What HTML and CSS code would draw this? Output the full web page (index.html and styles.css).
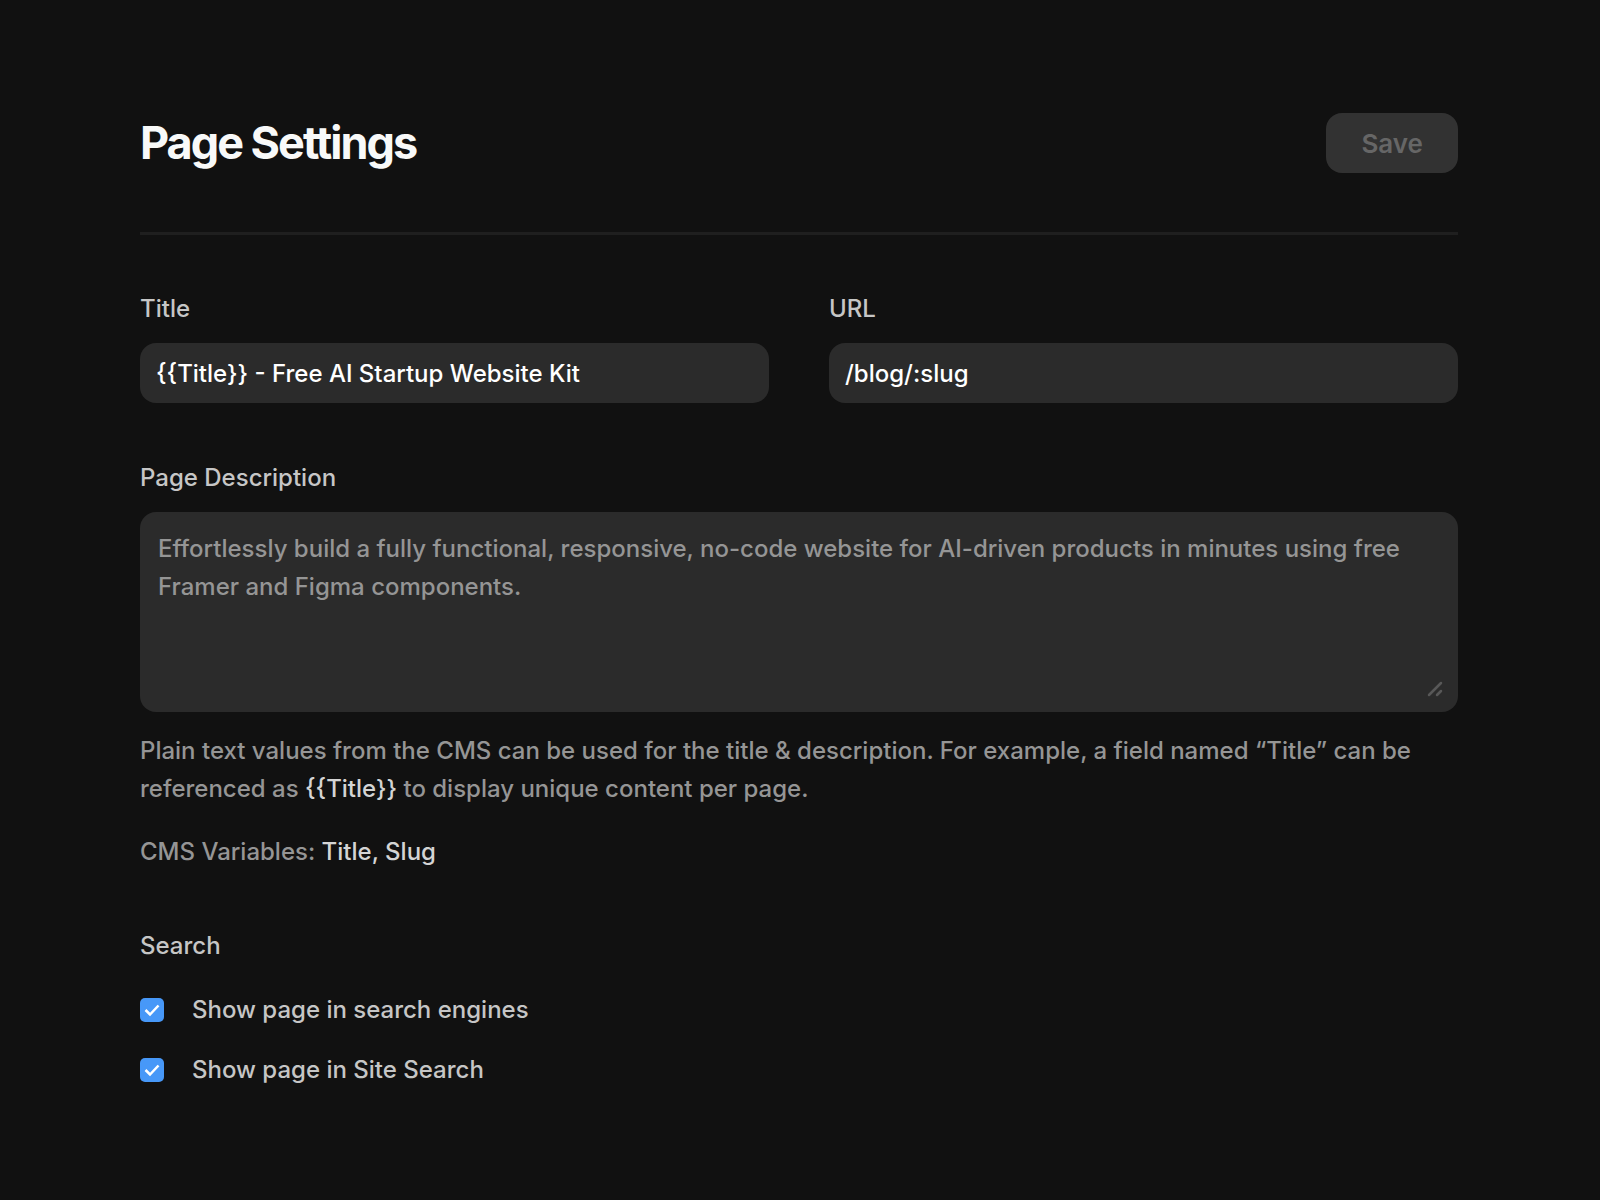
FILE: index.html
```html
<!DOCTYPE html>
<html lang="en">
<head>
    <meta charset="UTF-8">
    <meta name="viewport" content="width=device-width, initial-scale=1.0">
    <title>Page Settings</title>
    <link rel="stylesheet" href="styles.css">
</head>
<body>
    <form class="settings">
        <header class="header">
            <h1>Page Settings</h1>
            <button type="submit" class="save" disabled>Save</button>
        </header>

        <div class="row">
            <div class="field">
                <label for="title">Title</label>
                <input type="text" id="title" name="title" value="{{Title}} - Free AI Startup Website Kit">
            </div>
            <div class="field">
                <label for="url">URL</label>
                <input type="text" id="url" name="url" value="/blog/:slug">
            </div>
        </div>

        <div class="field description">
            <label for="description">Page Description</label>
            <div class="textarea-wrap">
                <textarea id="description" name="description" placeholder="Effortlessly build a fully functional, responsive, no-code website for AI-driven products in minutes using free Framer and Figma components."></textarea>
                <svg class="grip" viewBox="0 0 18 18" aria-hidden="true">
                    <path d="M3 15L15 3M11 15L15 11"/>
                </svg>
            </div>
        </div>

        <p class="hint">Plain text values from the CMS can be used for the title &amp; description. For example, a field named “Title” can be referenced as <span>{{Title}}</span> to display unique content per page.</p>
        <p class="hint">CMS Variables: <span>Title, Slug</span></p>

        <fieldset class="search">
            <legend>Search</legend>
            <label class="check">
                <input type="checkbox" name="search_engines" checked>
                Show page in search engines
            </label>
            <label class="check">
                <input type="checkbox" name="site_search" checked>
                Show page in Site Search
            </label>
        </fieldset>
    </form>
</body>
</html>
```

FILE: styles.css
```css
* {
    box-sizing: border-box;
}
body {
    margin: 0;
    padding: 113px 142px 80px 140px;
    background-color: #111;
    color: #c6c6c6;
    font-family: Inter, sans-serif;
    font-size: 24px;
    font-weight: 500;
    line-height: 38px;
}
.header {
    display: flex;
    justify-content: space-between;
    align-items: center;
    padding-bottom: 59px;
    border-bottom: 3px solid #1f1f1f;
}
h1 {
    margin: 0;
    color: #f8f9f9;
    font-size: 45px;
    font-weight: 700;
    letter-spacing: -2px;
    line-height: 60px;
}
.save {
    height: 60px;
    padding: 0 35px;
    border: none;
    border-radius: 16px;
    background-color: #323232;
    color: #666;
    font-family: inherit;
    font-size: 26px;
    font-weight: 600;
}
.row {
    display: grid;
    grid-template-columns: 1fr 1fr;
    gap: 60px;
    margin-top: 55px;
}
.field {
    display: flex;
    flex-direction: column;
    gap: 15px;
}
input[type="text"],
textarea {
    width: 100%;
    border: none;
    border-radius: 16px;
    background-color: #2b2b2b;
    color: #fff;
    font: inherit;
}
input[type="text"] {
    height: 60px;
    padding: 0 16px;
}
.description {
    margin-top: 56px;
}
.textarea-wrap {
    position: relative;
}
textarea {
    display: block;
    height: 200px;
    padding: 18px;
    resize: none;
}
textarea::placeholder {
    color: #959595;
}
.grip {
    position: absolute;
    right: 14px;
    bottom: 14px;
    width: 18px;
    height: 18px;
    fill: none;
    stroke: #585858;
    stroke-width: 2.5;
    stroke-linecap: round;
}
.hint {
    margin: 20px 0 0;
    color: #959595;
}
.hint + .hint {
    margin-top: 25px;
}
.hint span {
    color: #d4d4d4;
}
.search {
    margin: 56px 0 0;
    padding: 0;
    border: none;
}
legend {
    padding: 0;
    margin-bottom: 26px;
}
.check {
    display: flex;
    align-items: center;
    gap: 28px;
}
.check + .check {
    margin-top: 22px;
}
input[type="checkbox"] {
    appearance: none;
    width: 24px;
    height: 24px;
    margin: 0;
    border-radius: 5px;
    background: #4798f8 url("data:image/svg+xml,%3Csvg xmlns='http://www.w3.org/2000/svg' viewBox='0 0 24 24'%3E%3Cpath d='M5.5 12L10 16.5L18.5 7.5' fill='none' stroke='white' stroke-width='2.5'/%3E%3C/svg%3E") center / 24px;
}
```
